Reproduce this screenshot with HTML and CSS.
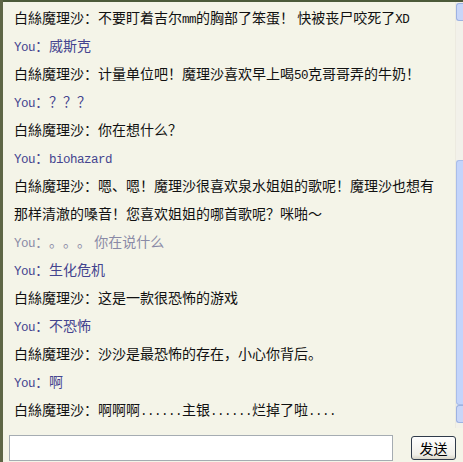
FILE: index.html
```html
<!DOCTYPE html>
<html lang="zh">
<head>
    <meta charset="UTF-8">
    <title>聊天</title>
    <link rel="stylesheet" href="styles.css">
</head>
<body>
    <div class="frame">
        <div class="chat">
            <div class="messages">
                <p class="bot">白絲魔理沙：不要盯着吉尔<span class="lat">mm</span>的胸部了笨蛋！ 快被丧尸咬死了<span class="lat">XD</span></p>
                <p class="you"><span class="lat">You</span>：威斯克</p>
                <p class="bot">白絲魔理沙：计量单位吧！魔理沙喜欢早上喝<span class="lat">50</span>克哥哥弄的牛奶！</p>
                <p class="you"><span class="lat">You</span>：？？？</p>
                <p class="bot">白絲魔理沙：你在想什么？</p>
                <p class="you"><span class="lat">You</span>：<span class="lat">biohazard</span></p>
                <p class="bot">白絲魔理沙：嗯、嗯！魔理沙很喜欢泉水姐姐的歌呢！魔理沙也想有</p>
                <p class="bot">那样清澈的嗓音！您喜欢姐姐的哪首歌呢？咪啪～</p>
                <p class="you faded"><span class="lat">You</span>：。。。 你在说什么</p>
                <p class="you"><span class="lat">You</span>：生化危机</p>
                <p class="bot">白絲魔理沙：这是一款很恐怖的游戏</p>
                <p class="you"><span class="lat">You</span>：不恐怖</p>
                <p class="bot">白絲魔理沙：沙沙是最恐怖的存在，小心你背后。</p>
                <p class="you"><span class="lat">You</span>：啊</p>
                <p class="bot">白絲魔理沙：啊啊啊<span class="lat">......</span>主银<span class="lat">......</span>烂掉了啦<span class="lat">....</span></p>
            </div>
            <div class="scrollbar">
                <div class="arrow up"></div>
                <div class="track">
                    <div class="thumb"></div>
                </div>
                <div class="arrow down"></div>
            </div>
        </div>
        <div class="composer">
            <input type="text" class="entry">
            <button class="send">发送</button>
        </div>
    </div>
</body>
</html>
```
FILE: styles.css
```css
body {
    margin: 0;
    background: #f4f4e8;
    font-family: "Noto Sans CJK SC", "Noto Sans", sans-serif;
    overflow: hidden;
}
.frame {
    height: 462px;
    border-left: 3px solid #5e6646;
    box-sizing: border-box;
}
.chat {
    display: flex;
    height: 428px;
    border-top: 2px solid #4c5a3a;
    box-sizing: border-box;
}
.messages {
    flex: 1;
    padding-left: 11px;
    padding-top: 1px;
    text-spacing-trim: space-all;
}
.messages p {
    margin: 0;
    height: 28px;
    line-height: 28px;
    font-size: 14px;
    white-space: nowrap;
}
.lat {
    font-family: "Liberation Mono", monospace;
    font-size: 12.5px;
    letter-spacing: -0.5px;
}
.bot {
    color: #111;
}
.you {
    color: #44448f;
}
.faded {
    color: #8a8aa6;
}
.scrollbar {
    width: 7px;
    display: flex;
    flex-direction: column;
    background: #f2f1ea;
    border-left: 1px solid #eceae0;
}
.arrow {
    height: 18px;
    background: #c8d6f8;
    border: 1px solid #9db2e2;
    border-right: none;
    border-radius: 3px 0 0 3px;
    box-sizing: border-box;
}
.up {
    margin-top: 1px;
}
.track {
    flex: 1;
    display: flex;
    flex-direction: column;
}
.thumb {
    margin-top: 139px;
    flex: 1;
    background: #c3d4fb;
    border: 1px solid #a9bde9;
    border-right: none;
    border-radius: 3px 0 0 3px;
}
.down {
    margin-bottom: 5px;
}
.composer {
    display: flex;
    align-items: center;
    padding: 7px 0 0 6px;
}
.entry {
    width: 384px;
    height: 26px;
    box-sizing: border-box;
    border: 1px solid #a5acb2;
    background: #fff;
    margin: 0;
}
.send {
    margin-left: 18px;
    width: 45px;
    height: 24px;
    border: 1px solid #2f3a4a;
    border-radius: 3px;
    background: linear-gradient(#fefefe, #f0efe8 80%, #d8d5c8);
    font-family: "Noto Sans CJK SC", sans-serif;
    font-size: 14px;
    color: #000;
    padding: 0;
}
```
